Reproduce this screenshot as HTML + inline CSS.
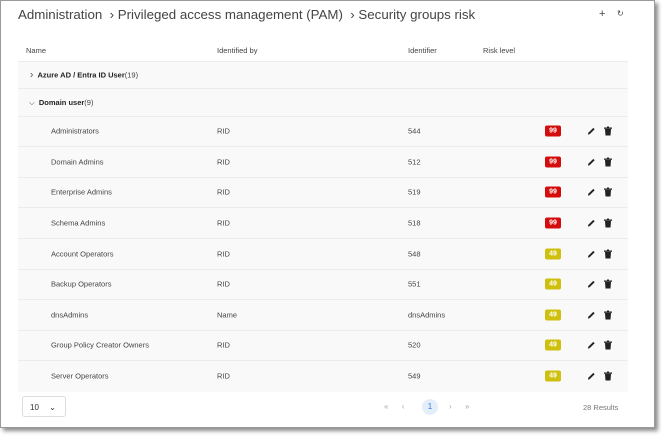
<!DOCTYPE html>
<html><head><style>
*{margin:0;padding:0;box-sizing:border-box}
body{width:662px;height:437px;background:#fff;font-family:"Liberation Sans",sans-serif;position:relative;overflow:hidden;color:#333}
.panel{position:absolute;left:0;top:0;width:655px;height:428px;background:#fff;border:1px solid #9a9a9a;box-shadow:3px 3px 4px rgba(0,0,0,.45)}
.t{position:absolute;white-space:nowrap}
.title{left:17px;top:6px;font-size:13.3px;color:#444}
.hdr{font-size:7.5px;color:#444;top:45px}
.table{position:absolute;left:17px;top:60px;width:610px;height:331px;background:#f9f9f9}
.row{position:absolute;left:0;width:610px;border-top:1px solid #ececf0;font-size:7.5px;color:#444}
.row span{position:absolute;top:50%;transform:translateY(-50%);white-space:nowrap}
.badge{position:absolute;left:527px;width:16px;height:11px;border-radius:2px;color:#fff;font-size:7px;font-weight:bold;text-align:center;line-height:11px;top:50%;transform:translateY(-50%)}
.red{background:#d40c0c}.yel{background:#cfc00e}
svg.ic{position:absolute;top:50%;transform:translateY(-50%)}
</style></head><body>
<div class="panel">
<div class="t title">Administration &nbsp;› Privileged access management (PAM) &nbsp;› Security groups risk</div>
<div class="t" style="left:598px;top:7px;font-size:11px;color:#444">+</div>
<div class="t" style="left:616px;top:8px;font-size:8px;color:#444">↻</div>
<div class="t hdr" style="left:25px">Name</div>
<div class="t hdr" style="left:216px">Identified by</div>
<div class="t hdr" style="left:407px">Identifier</div>
<div class="t hdr" style="left:482px">Risk level</div>
<div class="table">
<div class="row" style="top:0;height:27px"><span style="left:12px"><span style="position:static;font-size:10px;transform:none">›</span>&nbsp;&nbsp;<b style="color:#222">Azure AD / Entra ID User</b>(19)</span></div>
<div class="row" style="top:27px;height:28px"><span style="left:11px">⌵&nbsp;&nbsp;<b style="color:#222">Domain user</b>(9)</span></div>
</div>
<div id="rows"></div>
<div style="position:absolute;left:21px;top:395px;width:44px;height:21px;border:1px solid #ddd;border-radius:3px;font-size:8px;color:#333;padding:6px 0 0 7px">10 <span style="margin-left:8px">⌄</span></div>
<div class="t" style="left:383px;top:401px;font-size:8px;color:#aaa">«&nbsp;&nbsp;&nbsp;&nbsp;&nbsp;&nbsp;‹</div>
<div style="position:absolute;left:421px;top:398px;width:16px;height:16px;border-radius:50%;background:#e4eef9;color:#3a7bd5;font-size:8px;text-align:center;line-height:16px">1</div>
<div class="t" style="left:448px;top:401px;font-size:8px;color:#aaa">›&nbsp;&nbsp;&nbsp;&nbsp;&nbsp;&nbsp;»</div>
<div class="t" style="left:582px;top:402px;font-size:7.5px;color:#777">28 Results</div>
</div>
<script>
var d=[["Administrators","RID","544",99],["Domain Admins","RID","512",99],["Enterprise Admins","RID","519",99],["Schema Admins","RID","518",99],["Account Operators","RID","548",49],["Backup Operators","RID","551",49],["dnsAdmins","Name","dnsAdmins",49],["Group Policy Creator Owners","RID","520",49],["Server Operators","RID","549",49]];
var h="";
var pen='<svg class="ic" style="left:569px" width="9" height="9" viewBox="0 0 10 10"><path d="M1 9 L1.5 7 L7 1.5 L8.5 3 L3 8.5 Z" fill="#222"/></svg>';
var tr='<svg class="ic" style="left:586px" width="8" height="9" viewBox="0 0 8 9"><rect x="0" y="1" width="8" height="1.3" fill="#222"/><rect x="3" y="0" width="2" height="1" fill="#222"/><path d="M1 2.5H7L6.5 9H1.5Z" fill="#222"/></svg>';
for(var i=0;i<9;i++){var r=d[i];h+='<div class="row" style="top:'+(114.5+i*30.6)+'px;height:30.6px;left:17px;position:absolute"><span style="left:33px">'+r[0]+'</span><span style="left:199px">'+r[1]+'</span><span style="left:390px">'+r[2]+'</span><div class="badge '+(r[3]==99?'red':'yel')+'">'+r[3]+'</div>'+pen+tr+'</div>';}
document.getElementById('rows').innerHTML=h;
</script>
</body></html>
